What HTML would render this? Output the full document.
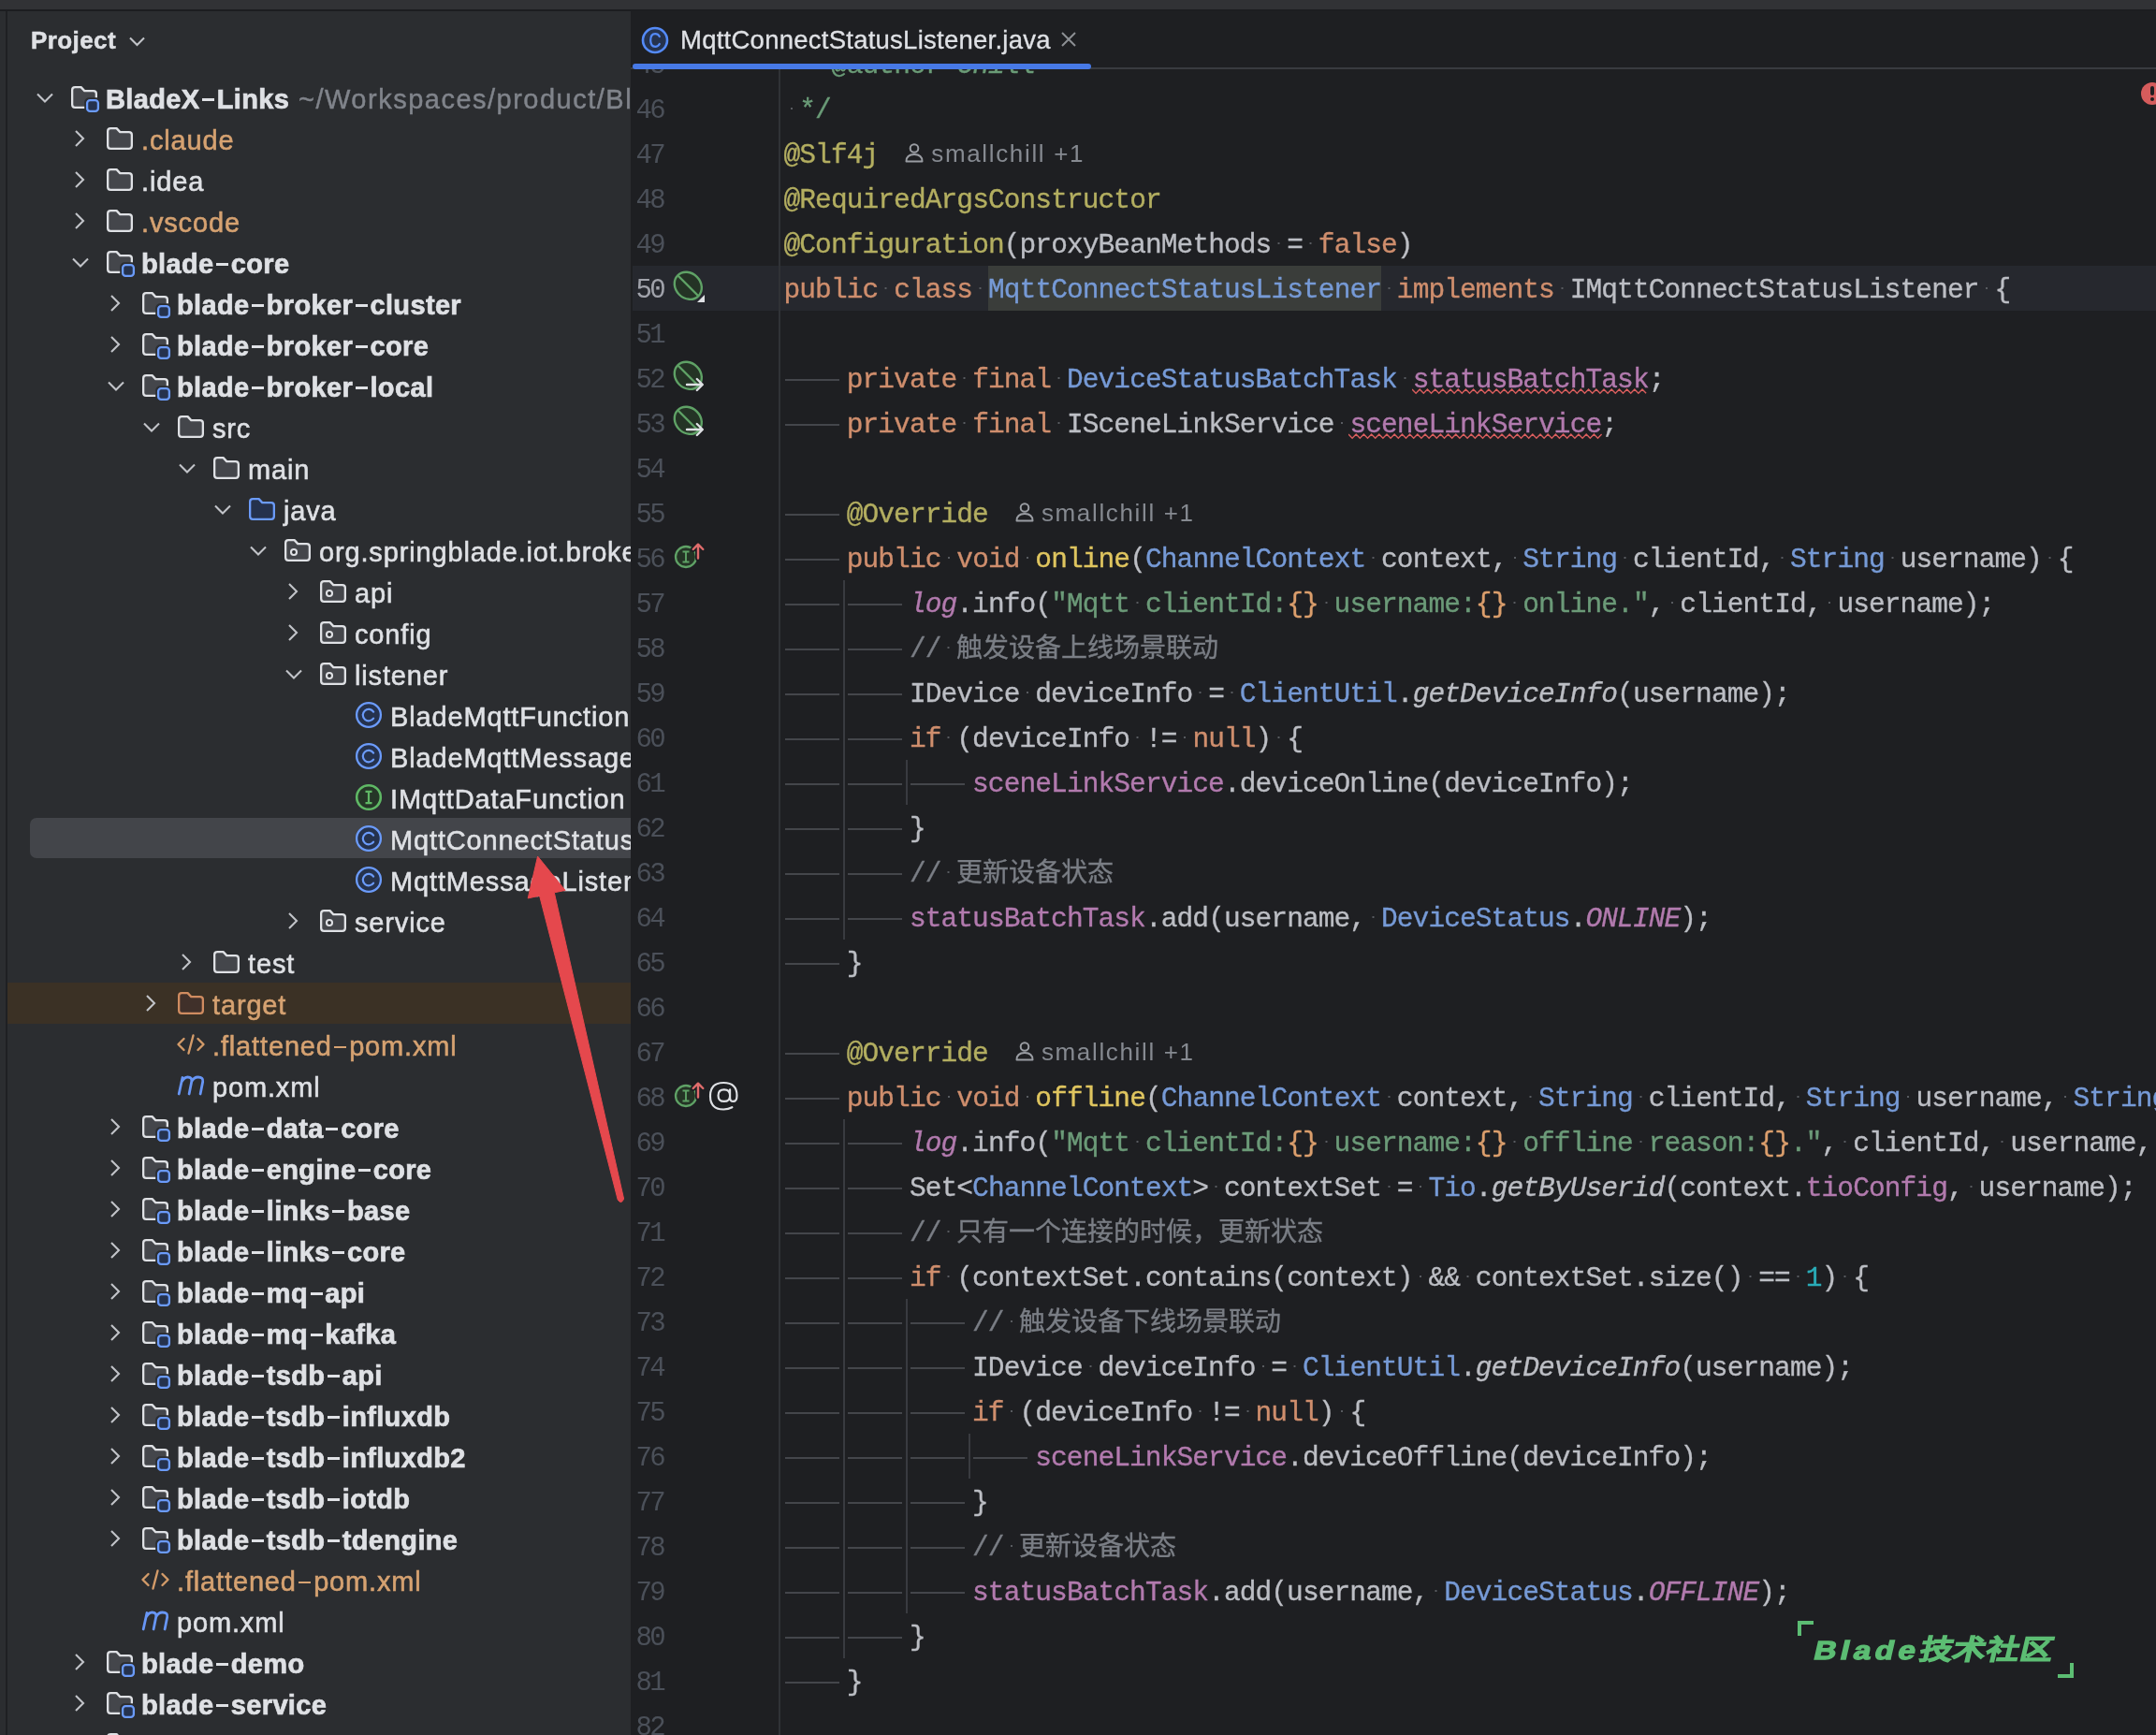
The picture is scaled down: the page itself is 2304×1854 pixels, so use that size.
<!DOCTYPE html><html lang="zh-CN"><head><meta charset="utf-8"><style>
*{margin:0;padding:0;box-sizing:border-box}
html,body{width:2304px;height:1854px;overflow:hidden;background:#2B2D30}
body{position:relative;font-family:"Liberation Sans",sans-serif}
#root{position:absolute;left:0;top:0;width:2304px;height:1854px;will-change:transform;background:#2B2D30}
.tt{position:absolute;height:44px;line-height:44px;font-size:29px;white-space:nowrap;color:#DFE1E5;letter-spacing:0.85px;padding-top:2px;-webkit-text-stroke:0.55px currentColor}
.dash{display:inline-block;width:18.3px;height:3px;position:relative;vertical-align:baseline}
.dash:after{content:'';position:absolute;left:2.6px;width:13px;height:2.6px;bottom:7.8px;background:currentColor}
.tb .dash:after{height:3.2px}
.tb{font-weight:bold;letter-spacing:0.35px;-webkit-text-stroke:0.7px #DFE1E5}
.to{color:#D6A271}
.tp{color:#80848B;font-weight:normal;-webkit-text-stroke:0.45px #80848B}
#side{position:absolute;left:0;top:12px;width:674px;height:1842px;background:#2B2D30;overflow:hidden}
#editor{position:absolute;left:674px;top:12px;width:1630px;height:1842px;background:#1E1F22;overflow:hidden}
.ln{position:absolute;left:674px;width:35px;height:48px;line-height:48px;text-align:right;font-family:"Liberation Mono",monospace;font-size:29px;letter-spacing:-2.6px;color:#4B5059;padding-top:3px}
.ln.cur{color:#A1A3AB}
.cl{position:absolute;left:837.5px;height:48px;line-height:48px;font-family:"Liberation Mono",monospace;font-size:29.5px;letter-spacing:-0.9px;color:#BCBEC4;white-space:pre;padding-top:2px;-webkit-text-stroke:0.35px currentColor}
.cjk{font-size:28px;letter-spacing:0}
.ws{background:radial-gradient(circle at 50% 15px, #585B60 0, #585B60 0.7px, rgba(0,0,0,0) 1.5px)}
.tab{display:inline-block;width:67.2px;height:48px;vertical-align:top;position:relative}
.tab:after{content:"";position:absolute;left:1px;width:58px;top:23px;height:2px;background:#44464B}
.kw{color:#CF8E6D}
.an{color:#B3AE60}
.bl{color:#769AD6}
.fd{color:#B27AAE}
.sf{color:#B27AAE;font-style:italic}
.md{color:#DFC55F}
.sc{font-style:italic}
.st{color:#6B9A78}
.sb{color:#DB9E6C}
.cm{color:#7A7E85}

.nm{color:#2AACB8}
.dc{color:#6A9B77}
.dt{color:#6A9B77}
.wavy{text-decoration:underline wavy #E35D5D;text-decoration-thickness:1.3px;text-underline-offset:1px}
.inl{position:absolute;height:48px;line-height:48px;font-size:26px;color:#868A91;white-space:nowrap;letter-spacing:1.65px;padding-top:2px}
</style></head><body><div id="root">
<div style="position:absolute;left:0;top:0;width:2304px;height:10px;background:#313235"></div>
<div style="position:absolute;left:0;top:10px;width:2304px;height:2px;background:#1C1D20"></div>
<div style="position:absolute;left:0;top:12px;width:674px;height:1842px;background:#2B2D30"></div>
<div style="position:absolute;left:6px;top:12px;width:2px;height:1842px;background:#1F2023"></div>
<div style="position:absolute;left:33px;top:19px;height:44px;line-height:44px;font-size:26px;font-weight:bold;color:#DFE1E5;letter-spacing:0.4px;padding-top:2px;-webkit-text-stroke:0.5px #DFE1E5">Project</div>
<svg width="20" height="14" viewBox="0 0 20 14" style="position:absolute;left:137px;top:38px"><path d="M2 2.5 L9.5 10 L17 2.5" fill="none" stroke="#C2C4C9" stroke-width="2.1"/></svg>
<div style="position:absolute;left:0;top:12px;width:674px;height:1842px;overflow:hidden">
<div style="position:absolute;left:0;top:-12px;width:674px;height:1854px">
<div style="position:absolute;left:38px;top:98px;width:20px;height:14px"><svg width="20" height="14" viewBox="0 0 20 14" style="position:absolute;left:0;top:0"><path d="M2 2.5 L10 10.5 L18 2.5" fill="none" stroke="#C2C4C9" stroke-width="2.1"/></svg></div>
<div style="position:absolute;left:76px;top:92px;width:28px;height:24px"><svg width="34" height="30" viewBox="0 0 34 30" style="position:absolute;left:-1px;top:-1px"><path d="M2.15 5.2 Q2.15 2.15 5.2 2.15 L11.6 2.15 L15.3 6.1 L24.8 6.1 Q27.85 6.1 27.85 9.1 L27.85 20.8 Q27.85 23.85 24.8 23.85 L5.2 23.85 Q2.15 23.85 2.15 20.8 Z" fill="#44464B" stroke="#DFE1E5" stroke-width="2.3" stroke-linejoin="round"/><rect x="15.2" y="13.2" width="17.6" height="17.6" rx="5" fill="#2B2D30"/><rect x="18.1" y="16.1" width="11.8" height="11.8" rx="3.2" fill="#25324D" stroke="#6B9BFA" stroke-width="2.3"/></svg></div>
<div class="tt tp" style="left:319px;top:82px;letter-spacing:1.5px">~/Workspaces/product/BladeX-Links</div>
<div class="tt tb" style="left:113px;top:82px">BladeX<span class="dash"></span>Links</div>
<div style="position:absolute;left:79px;top:138px;width:14px;height:20px;z-index:2"><svg width="14" height="20" viewBox="0 0 14 20" style="position:absolute;left:0;top:0"><path d="M2 2 L10 10 L2 18" fill="none" stroke="#C2C4C9" stroke-width="2.1"/></svg></div>
<div style="position:absolute;left:114px;top:136px;width:28px;height:24px"><svg width="30" height="26" viewBox="0 0 30 26" style="position:absolute;left:-1px;top:-1px"><path d="M2.15 5.2 Q2.15 2.15 5.2 2.15 L11.6 2.15 L15.3 6.1 L24.8 6.1 Q27.85 6.1 27.85 9.1 L27.85 20.8 Q27.85 23.85 24.8 23.85 L5.2 23.85 Q2.15 23.85 2.15 20.8 Z" fill="#44464B" stroke="#DFE1E5" stroke-width="2.3" stroke-linejoin="round"/></svg></div>
<div class="tt to" style="left:151px;top:126px">.claude</div>
<div style="position:absolute;left:79px;top:182px;width:14px;height:20px;z-index:2"><svg width="14" height="20" viewBox="0 0 14 20" style="position:absolute;left:0;top:0"><path d="M2 2 L10 10 L2 18" fill="none" stroke="#C2C4C9" stroke-width="2.1"/></svg></div>
<div style="position:absolute;left:114px;top:180px;width:28px;height:24px"><svg width="30" height="26" viewBox="0 0 30 26" style="position:absolute;left:-1px;top:-1px"><path d="M2.15 5.2 Q2.15 2.15 5.2 2.15 L11.6 2.15 L15.3 6.1 L24.8 6.1 Q27.85 6.1 27.85 9.1 L27.85 20.8 Q27.85 23.85 24.8 23.85 L5.2 23.85 Q2.15 23.85 2.15 20.8 Z" fill="#44464B" stroke="#DFE1E5" stroke-width="2.3" stroke-linejoin="round"/></svg></div>
<div class="tt tn" style="left:151px;top:170px">.idea</div>
<div style="position:absolute;left:79px;top:226px;width:14px;height:20px;z-index:2"><svg width="14" height="20" viewBox="0 0 14 20" style="position:absolute;left:0;top:0"><path d="M2 2 L10 10 L2 18" fill="none" stroke="#C2C4C9" stroke-width="2.1"/></svg></div>
<div style="position:absolute;left:114px;top:224px;width:28px;height:24px"><svg width="30" height="26" viewBox="0 0 30 26" style="position:absolute;left:-1px;top:-1px"><path d="M2.15 5.2 Q2.15 2.15 5.2 2.15 L11.6 2.15 L15.3 6.1 L24.8 6.1 Q27.85 6.1 27.85 9.1 L27.85 20.8 Q27.85 23.85 24.8 23.85 L5.2 23.85 Q2.15 23.85 2.15 20.8 Z" fill="#44464B" stroke="#DFE1E5" stroke-width="2.3" stroke-linejoin="round"/></svg></div>
<div class="tt to" style="left:151px;top:214px">.vscode</div>
<div style="position:absolute;left:76px;top:274px;width:20px;height:14px"><svg width="20" height="14" viewBox="0 0 20 14" style="position:absolute;left:0;top:0"><path d="M2 2.5 L10 10.5 L18 2.5" fill="none" stroke="#C2C4C9" stroke-width="2.1"/></svg></div>
<div style="position:absolute;left:114px;top:268px;width:28px;height:24px"><svg width="34" height="30" viewBox="0 0 34 30" style="position:absolute;left:-1px;top:-1px"><path d="M2.15 5.2 Q2.15 2.15 5.2 2.15 L11.6 2.15 L15.3 6.1 L24.8 6.1 Q27.85 6.1 27.85 9.1 L27.85 20.8 Q27.85 23.85 24.8 23.85 L5.2 23.85 Q2.15 23.85 2.15 20.8 Z" fill="#44464B" stroke="#DFE1E5" stroke-width="2.3" stroke-linejoin="round"/><rect x="15.2" y="13.2" width="17.6" height="17.6" rx="5" fill="#2B2D30"/><rect x="18.1" y="16.1" width="11.8" height="11.8" rx="3.2" fill="#25324D" stroke="#6B9BFA" stroke-width="2.3"/></svg></div>
<div class="tt tb" style="left:151px;top:258px">blade<span class="dash"></span>core</div>
<div style="position:absolute;left:117px;top:314px;width:14px;height:20px;z-index:2"><svg width="14" height="20" viewBox="0 0 14 20" style="position:absolute;left:0;top:0"><path d="M2 2 L10 10 L2 18" fill="none" stroke="#C2C4C9" stroke-width="2.1"/></svg></div>
<div style="position:absolute;left:152px;top:312px;width:28px;height:24px"><svg width="34" height="30" viewBox="0 0 34 30" style="position:absolute;left:-1px;top:-1px"><path d="M2.15 5.2 Q2.15 2.15 5.2 2.15 L11.6 2.15 L15.3 6.1 L24.8 6.1 Q27.85 6.1 27.85 9.1 L27.85 20.8 Q27.85 23.85 24.8 23.85 L5.2 23.85 Q2.15 23.85 2.15 20.8 Z" fill="#44464B" stroke="#DFE1E5" stroke-width="2.3" stroke-linejoin="round"/><rect x="15.2" y="13.2" width="17.6" height="17.6" rx="5" fill="#2B2D30"/><rect x="18.1" y="16.1" width="11.8" height="11.8" rx="3.2" fill="#25324D" stroke="#6B9BFA" stroke-width="2.3"/></svg></div>
<div class="tt tb" style="left:189px;top:302px">blade<span class="dash"></span>broker<span class="dash"></span>cluster</div>
<div style="position:absolute;left:117px;top:358px;width:14px;height:20px;z-index:2"><svg width="14" height="20" viewBox="0 0 14 20" style="position:absolute;left:0;top:0"><path d="M2 2 L10 10 L2 18" fill="none" stroke="#C2C4C9" stroke-width="2.1"/></svg></div>
<div style="position:absolute;left:152px;top:356px;width:28px;height:24px"><svg width="34" height="30" viewBox="0 0 34 30" style="position:absolute;left:-1px;top:-1px"><path d="M2.15 5.2 Q2.15 2.15 5.2 2.15 L11.6 2.15 L15.3 6.1 L24.8 6.1 Q27.85 6.1 27.85 9.1 L27.85 20.8 Q27.85 23.85 24.8 23.85 L5.2 23.85 Q2.15 23.85 2.15 20.8 Z" fill="#44464B" stroke="#DFE1E5" stroke-width="2.3" stroke-linejoin="round"/><rect x="15.2" y="13.2" width="17.6" height="17.6" rx="5" fill="#2B2D30"/><rect x="18.1" y="16.1" width="11.8" height="11.8" rx="3.2" fill="#25324D" stroke="#6B9BFA" stroke-width="2.3"/></svg></div>
<div class="tt tb" style="left:189px;top:346px">blade<span class="dash"></span>broker<span class="dash"></span>core</div>
<div style="position:absolute;left:114px;top:406px;width:20px;height:14px"><svg width="20" height="14" viewBox="0 0 20 14" style="position:absolute;left:0;top:0"><path d="M2 2.5 L10 10.5 L18 2.5" fill="none" stroke="#C2C4C9" stroke-width="2.1"/></svg></div>
<div style="position:absolute;left:152px;top:400px;width:28px;height:24px"><svg width="34" height="30" viewBox="0 0 34 30" style="position:absolute;left:-1px;top:-1px"><path d="M2.15 5.2 Q2.15 2.15 5.2 2.15 L11.6 2.15 L15.3 6.1 L24.8 6.1 Q27.85 6.1 27.85 9.1 L27.85 20.8 Q27.85 23.85 24.8 23.85 L5.2 23.85 Q2.15 23.85 2.15 20.8 Z" fill="#44464B" stroke="#DFE1E5" stroke-width="2.3" stroke-linejoin="round"/><rect x="15.2" y="13.2" width="17.6" height="17.6" rx="5" fill="#2B2D30"/><rect x="18.1" y="16.1" width="11.8" height="11.8" rx="3.2" fill="#25324D" stroke="#6B9BFA" stroke-width="2.3"/></svg></div>
<div class="tt tb" style="left:189px;top:390px">blade<span class="dash"></span>broker<span class="dash"></span>local</div>
<div style="position:absolute;left:152px;top:450px;width:20px;height:14px"><svg width="20" height="14" viewBox="0 0 20 14" style="position:absolute;left:0;top:0"><path d="M2 2.5 L10 10.5 L18 2.5" fill="none" stroke="#C2C4C9" stroke-width="2.1"/></svg></div>
<div style="position:absolute;left:190px;top:444px;width:28px;height:24px"><svg width="30" height="26" viewBox="0 0 30 26" style="position:absolute;left:-1px;top:-1px"><path d="M2.15 5.2 Q2.15 2.15 5.2 2.15 L11.6 2.15 L15.3 6.1 L24.8 6.1 Q27.85 6.1 27.85 9.1 L27.85 20.8 Q27.85 23.85 24.8 23.85 L5.2 23.85 Q2.15 23.85 2.15 20.8 Z" fill="#44464B" stroke="#DFE1E5" stroke-width="2.3" stroke-linejoin="round"/></svg></div>
<div class="tt tn" style="left:227px;top:434px">src</div>
<div style="position:absolute;left:190px;top:494px;width:20px;height:14px"><svg width="20" height="14" viewBox="0 0 20 14" style="position:absolute;left:0;top:0"><path d="M2 2.5 L10 10.5 L18 2.5" fill="none" stroke="#C2C4C9" stroke-width="2.1"/></svg></div>
<div style="position:absolute;left:228px;top:488px;width:28px;height:24px"><svg width="30" height="26" viewBox="0 0 30 26" style="position:absolute;left:-1px;top:-1px"><path d="M2.15 5.2 Q2.15 2.15 5.2 2.15 L11.6 2.15 L15.3 6.1 L24.8 6.1 Q27.85 6.1 27.85 9.1 L27.85 20.8 Q27.85 23.85 24.8 23.85 L5.2 23.85 Q2.15 23.85 2.15 20.8 Z" fill="#44464B" stroke="#DFE1E5" stroke-width="2.3" stroke-linejoin="round"/></svg></div>
<div class="tt tn" style="left:265px;top:478px">main</div>
<div style="position:absolute;left:228px;top:538px;width:20px;height:14px"><svg width="20" height="14" viewBox="0 0 20 14" style="position:absolute;left:0;top:0"><path d="M2 2.5 L10 10.5 L18 2.5" fill="none" stroke="#C2C4C9" stroke-width="2.1"/></svg></div>
<div style="position:absolute;left:266px;top:532px;width:28px;height:24px"><svg width="30" height="26" viewBox="0 0 30 26" style="position:absolute;left:-1px;top:-1px"><path d="M2.15 5.2 Q2.15 2.15 5.2 2.15 L11.6 2.15 L15.3 6.1 L24.8 6.1 Q27.85 6.1 27.85 9.1 L27.85 20.8 Q27.85 23.85 24.8 23.85 L5.2 23.85 Q2.15 23.85 2.15 20.8 Z" fill="#25324D" stroke="#6B9BFA" stroke-width="2.3" stroke-linejoin="round"/></svg></div>
<div class="tt tn" style="left:303px;top:522px">java</div>
<div style="position:absolute;left:266px;top:582px;width:20px;height:14px"><svg width="20" height="14" viewBox="0 0 20 14" style="position:absolute;left:0;top:0"><path d="M2 2.5 L10 10.5 L18 2.5" fill="none" stroke="#C2C4C9" stroke-width="2.1"/></svg></div>
<div style="position:absolute;left:304px;top:576px;width:28px;height:24px"><svg width="30" height="26" viewBox="0 0 30 26" style="position:absolute;left:-1px;top:-1px"><path d="M2.15 5.2 Q2.15 2.15 5.2 2.15 L11.6 2.15 L15.3 6.1 L24.8 6.1 Q27.85 6.1 27.85 9.1 L27.85 20.8 Q27.85 23.85 24.8 23.85 L5.2 23.85 Q2.15 23.85 2.15 20.8 Z" fill="#44464B" stroke="#DFE1E5" stroke-width="2.3" stroke-linejoin="round"/><circle cx="11" cy="15" r="3" fill="#2B2D30" stroke="#DFE1E5" stroke-width="2.1"/></svg></div>
<div class="tt tn" style="left:341px;top:566px">org.springblade.iot.broker.local</div>
<div style="position:absolute;left:307px;top:622px;width:14px;height:20px;z-index:2"><svg width="14" height="20" viewBox="0 0 14 20" style="position:absolute;left:0;top:0"><path d="M2 2 L10 10 L2 18" fill="none" stroke="#C2C4C9" stroke-width="2.1"/></svg></div>
<div style="position:absolute;left:342px;top:620px;width:28px;height:24px"><svg width="30" height="26" viewBox="0 0 30 26" style="position:absolute;left:-1px;top:-1px"><path d="M2.15 5.2 Q2.15 2.15 5.2 2.15 L11.6 2.15 L15.3 6.1 L24.8 6.1 Q27.85 6.1 27.85 9.1 L27.85 20.8 Q27.85 23.85 24.8 23.85 L5.2 23.85 Q2.15 23.85 2.15 20.8 Z" fill="#44464B" stroke="#DFE1E5" stroke-width="2.3" stroke-linejoin="round"/><circle cx="11" cy="15" r="3" fill="#2B2D30" stroke="#DFE1E5" stroke-width="2.1"/></svg></div>
<div class="tt tn" style="left:379px;top:610px">api</div>
<div style="position:absolute;left:307px;top:666px;width:14px;height:20px;z-index:2"><svg width="14" height="20" viewBox="0 0 14 20" style="position:absolute;left:0;top:0"><path d="M2 2 L10 10 L2 18" fill="none" stroke="#C2C4C9" stroke-width="2.1"/></svg></div>
<div style="position:absolute;left:342px;top:664px;width:28px;height:24px"><svg width="30" height="26" viewBox="0 0 30 26" style="position:absolute;left:-1px;top:-1px"><path d="M2.15 5.2 Q2.15 2.15 5.2 2.15 L11.6 2.15 L15.3 6.1 L24.8 6.1 Q27.85 6.1 27.85 9.1 L27.85 20.8 Q27.85 23.85 24.8 23.85 L5.2 23.85 Q2.15 23.85 2.15 20.8 Z" fill="#44464B" stroke="#DFE1E5" stroke-width="2.3" stroke-linejoin="round"/><circle cx="11" cy="15" r="3" fill="#2B2D30" stroke="#DFE1E5" stroke-width="2.1"/></svg></div>
<div class="tt tn" style="left:379px;top:654px">config</div>
<div style="position:absolute;left:304px;top:714px;width:20px;height:14px"><svg width="20" height="14" viewBox="0 0 20 14" style="position:absolute;left:0;top:0"><path d="M2 2.5 L10 10.5 L18 2.5" fill="none" stroke="#C2C4C9" stroke-width="2.1"/></svg></div>
<div style="position:absolute;left:342px;top:708px;width:28px;height:24px"><svg width="30" height="26" viewBox="0 0 30 26" style="position:absolute;left:-1px;top:-1px"><path d="M2.15 5.2 Q2.15 2.15 5.2 2.15 L11.6 2.15 L15.3 6.1 L24.8 6.1 Q27.85 6.1 27.85 9.1 L27.85 20.8 Q27.85 23.85 24.8 23.85 L5.2 23.85 Q2.15 23.85 2.15 20.8 Z" fill="#44464B" stroke="#DFE1E5" stroke-width="2.3" stroke-linejoin="round"/><circle cx="11" cy="15" r="3" fill="#2B2D30" stroke="#DFE1E5" stroke-width="2.1"/></svg></div>
<div class="tt tn" style="left:379px;top:698px">listener</div>
<div style="position:absolute;left:380px;top:750px;width:28px;height:24px"><svg width="30" height="30" viewBox="0 0 30 30" style="position:absolute;left:-1px;top:-1px"><circle cx="15" cy="15" r="12.9" fill="#25324D" stroke="#6B9BFA" stroke-width="2.3"/><path d="M20.1 11.6 A6.2 6.2 0 1 0 20.1 18.6" fill="none" stroke="#6B9BFA" stroke-width="2.2" stroke-linecap="round"/></svg></div>
<div class="tt tn" style="left:417px;top:742px">BladeMqttFunctionListener</div>
<div style="position:absolute;left:380px;top:794px;width:28px;height:24px"><svg width="30" height="30" viewBox="0 0 30 30" style="position:absolute;left:-1px;top:-1px"><circle cx="15" cy="15" r="12.9" fill="#25324D" stroke="#6B9BFA" stroke-width="2.3"/><path d="M20.1 11.6 A6.2 6.2 0 1 0 20.1 18.6" fill="none" stroke="#6B9BFA" stroke-width="2.2" stroke-linecap="round"/></svg></div>
<div class="tt tn" style="left:417px;top:786px">BladeMqttMessageListener</div>
<div style="position:absolute;left:380px;top:838px;width:28px;height:24px"><svg width="30" height="30" viewBox="0 0 30 30" style="position:absolute;left:-1px;top:-1px"><circle cx="15" cy="15" r="12.8" fill="#253627" stroke="#5FB865" stroke-width="2.6"/><path d="M11.5 8.8 H18.5 M15 8.8 V21.2 M11.5 21.2 H18.5" fill="none" stroke="#5FB865" stroke-width="2.2"/></svg></div>
<div class="tt tn" style="left:417px;top:830px">IMqttDataFunction</div>
<div style="position:absolute;left:32px;top:874px;width:660px;height:43px;background:#43454A;border-radius:7px"></div>
<div style="position:absolute;left:380px;top:882px;width:28px;height:24px"><svg width="30" height="30" viewBox="0 0 30 30" style="position:absolute;left:-1px;top:-1px"><circle cx="15" cy="15" r="12.9" fill="#25324D" stroke="#6B9BFA" stroke-width="2.3"/><path d="M20.1 11.6 A6.2 6.2 0 1 0 20.1 18.6" fill="none" stroke="#6B9BFA" stroke-width="2.2" stroke-linecap="round"/></svg></div>
<div class="tt tn" style="left:417px;top:874px">MqttConnectStatusListener</div>
<div style="position:absolute;left:380px;top:926px;width:28px;height:24px"><svg width="30" height="30" viewBox="0 0 30 30" style="position:absolute;left:-1px;top:-1px"><circle cx="15" cy="15" r="12.9" fill="#25324D" stroke="#6B9BFA" stroke-width="2.3"/><path d="M20.1 11.6 A6.2 6.2 0 1 0 20.1 18.6" fill="none" stroke="#6B9BFA" stroke-width="2.2" stroke-linecap="round"/></svg></div>
<div class="tt tn" style="left:417px;top:918px">MqttMessageListener</div>
<div style="position:absolute;left:307px;top:974px;width:14px;height:20px;z-index:2"><svg width="14" height="20" viewBox="0 0 14 20" style="position:absolute;left:0;top:0"><path d="M2 2 L10 10 L2 18" fill="none" stroke="#C2C4C9" stroke-width="2.1"/></svg></div>
<div style="position:absolute;left:342px;top:972px;width:28px;height:24px"><svg width="30" height="26" viewBox="0 0 30 26" style="position:absolute;left:-1px;top:-1px"><path d="M2.15 5.2 Q2.15 2.15 5.2 2.15 L11.6 2.15 L15.3 6.1 L24.8 6.1 Q27.85 6.1 27.85 9.1 L27.85 20.8 Q27.85 23.85 24.8 23.85 L5.2 23.85 Q2.15 23.85 2.15 20.8 Z" fill="#44464B" stroke="#DFE1E5" stroke-width="2.3" stroke-linejoin="round"/><circle cx="11" cy="15" r="3" fill="#2B2D30" stroke="#DFE1E5" stroke-width="2.1"/></svg></div>
<div class="tt tn" style="left:379px;top:962px">service</div>
<div style="position:absolute;left:193px;top:1018px;width:14px;height:20px;z-index:2"><svg width="14" height="20" viewBox="0 0 14 20" style="position:absolute;left:0;top:0"><path d="M2 2 L10 10 L2 18" fill="none" stroke="#C2C4C9" stroke-width="2.1"/></svg></div>
<div style="position:absolute;left:228px;top:1016px;width:28px;height:24px"><svg width="30" height="26" viewBox="0 0 30 26" style="position:absolute;left:-1px;top:-1px"><path d="M2.15 5.2 Q2.15 2.15 5.2 2.15 L11.6 2.15 L15.3 6.1 L24.8 6.1 Q27.85 6.1 27.85 9.1 L27.85 20.8 Q27.85 23.85 24.8 23.85 L5.2 23.85 Q2.15 23.85 2.15 20.8 Z" fill="#44464B" stroke="#DFE1E5" stroke-width="2.3" stroke-linejoin="round"/></svg></div>
<div class="tt tn" style="left:265px;top:1006px">test</div>
<div style="position:absolute;left:8px;top:1050px;width:666px;height:44px;background:#3B3125"></div>
<div style="position:absolute;left:155px;top:1062px;width:14px;height:20px;z-index:2"><svg width="14" height="20" viewBox="0 0 14 20" style="position:absolute;left:0;top:0"><path d="M2 2 L10 10 L2 18" fill="none" stroke="#C2C4C9" stroke-width="2.1"/></svg></div>
<div style="position:absolute;left:190px;top:1060px;width:28px;height:24px"><svg width="30" height="26" viewBox="0 0 30 26" style="position:absolute;left:-1px;top:-1px"><path d="M2.15 5.2 Q2.15 2.15 5.2 2.15 L11.6 2.15 L15.3 6.1 L24.8 6.1 Q27.85 6.1 27.85 9.1 L27.85 20.8 Q27.85 23.85 24.8 23.85 L5.2 23.85 Q2.15 23.85 2.15 20.8 Z" fill="#40302A" stroke="#D08C60" stroke-width="2.3" stroke-linejoin="round"/></svg></div>
<div class="tt to" style="left:227px;top:1050px">target</div>
<div style="position:absolute;left:190px;top:1102px;width:28px;height:24px"><svg width="32" height="30" viewBox="0 0 32 30" style="position:absolute;left:-2px;top:-1px"><path d="M8.5 9 L2.5 15 L8.5 21 M23.5 9 L29.5 15 L23.5 21 M18.5 5.5 L13.5 24.5" fill="none" stroke="#D39B69" stroke-width="2.4" stroke-linecap="round" stroke-linejoin="round"/></svg></div>
<div class="tt to" style="left:227px;top:1094px">.flattened<span class="dash"></span>pom.xml</div>
<div style="position:absolute;left:190px;top:1146px;width:28px;height:24px"><svg width="32" height="30" viewBox="0 0 32 30" style="position:absolute;left:-1px;top:-1px"><path d="M2.2 24 L6 6.5 M4.9 11.5 Q7.6 6 11.6 6 Q16.6 6 15.7 11 L13.1 24 M15.7 11 Q18.1 6 22.6 6 Q28.6 6 27.7 11 L25.1 24" fill="none" stroke="#6896F5" stroke-width="2.8" stroke-linecap="round" stroke-linejoin="round"/></svg></div>
<div class="tt tn" style="left:227px;top:1138px">pom.xml</div>
<div style="position:absolute;left:117px;top:1194px;width:14px;height:20px;z-index:2"><svg width="14" height="20" viewBox="0 0 14 20" style="position:absolute;left:0;top:0"><path d="M2 2 L10 10 L2 18" fill="none" stroke="#C2C4C9" stroke-width="2.1"/></svg></div>
<div style="position:absolute;left:152px;top:1192px;width:28px;height:24px"><svg width="34" height="30" viewBox="0 0 34 30" style="position:absolute;left:-1px;top:-1px"><path d="M2.15 5.2 Q2.15 2.15 5.2 2.15 L11.6 2.15 L15.3 6.1 L24.8 6.1 Q27.85 6.1 27.85 9.1 L27.85 20.8 Q27.85 23.85 24.8 23.85 L5.2 23.85 Q2.15 23.85 2.15 20.8 Z" fill="#44464B" stroke="#DFE1E5" stroke-width="2.3" stroke-linejoin="round"/><rect x="15.2" y="13.2" width="17.6" height="17.6" rx="5" fill="#2B2D30"/><rect x="18.1" y="16.1" width="11.8" height="11.8" rx="3.2" fill="#25324D" stroke="#6B9BFA" stroke-width="2.3"/></svg></div>
<div class="tt tb" style="left:189px;top:1182px">blade<span class="dash"></span>data<span class="dash"></span>core</div>
<div style="position:absolute;left:117px;top:1238px;width:14px;height:20px;z-index:2"><svg width="14" height="20" viewBox="0 0 14 20" style="position:absolute;left:0;top:0"><path d="M2 2 L10 10 L2 18" fill="none" stroke="#C2C4C9" stroke-width="2.1"/></svg></div>
<div style="position:absolute;left:152px;top:1236px;width:28px;height:24px"><svg width="34" height="30" viewBox="0 0 34 30" style="position:absolute;left:-1px;top:-1px"><path d="M2.15 5.2 Q2.15 2.15 5.2 2.15 L11.6 2.15 L15.3 6.1 L24.8 6.1 Q27.85 6.1 27.85 9.1 L27.85 20.8 Q27.85 23.85 24.8 23.85 L5.2 23.85 Q2.15 23.85 2.15 20.8 Z" fill="#44464B" stroke="#DFE1E5" stroke-width="2.3" stroke-linejoin="round"/><rect x="15.2" y="13.2" width="17.6" height="17.6" rx="5" fill="#2B2D30"/><rect x="18.1" y="16.1" width="11.8" height="11.8" rx="3.2" fill="#25324D" stroke="#6B9BFA" stroke-width="2.3"/></svg></div>
<div class="tt tb" style="left:189px;top:1226px">blade<span class="dash"></span>engine<span class="dash"></span>core</div>
<div style="position:absolute;left:117px;top:1282px;width:14px;height:20px;z-index:2"><svg width="14" height="20" viewBox="0 0 14 20" style="position:absolute;left:0;top:0"><path d="M2 2 L10 10 L2 18" fill="none" stroke="#C2C4C9" stroke-width="2.1"/></svg></div>
<div style="position:absolute;left:152px;top:1280px;width:28px;height:24px"><svg width="34" height="30" viewBox="0 0 34 30" style="position:absolute;left:-1px;top:-1px"><path d="M2.15 5.2 Q2.15 2.15 5.2 2.15 L11.6 2.15 L15.3 6.1 L24.8 6.1 Q27.85 6.1 27.85 9.1 L27.85 20.8 Q27.85 23.85 24.8 23.85 L5.2 23.85 Q2.15 23.85 2.15 20.8 Z" fill="#44464B" stroke="#DFE1E5" stroke-width="2.3" stroke-linejoin="round"/><rect x="15.2" y="13.2" width="17.6" height="17.6" rx="5" fill="#2B2D30"/><rect x="18.1" y="16.1" width="11.8" height="11.8" rx="3.2" fill="#25324D" stroke="#6B9BFA" stroke-width="2.3"/></svg></div>
<div class="tt tb" style="left:189px;top:1270px">blade<span class="dash"></span>links<span class="dash"></span>base</div>
<div style="position:absolute;left:117px;top:1326px;width:14px;height:20px;z-index:2"><svg width="14" height="20" viewBox="0 0 14 20" style="position:absolute;left:0;top:0"><path d="M2 2 L10 10 L2 18" fill="none" stroke="#C2C4C9" stroke-width="2.1"/></svg></div>
<div style="position:absolute;left:152px;top:1324px;width:28px;height:24px"><svg width="34" height="30" viewBox="0 0 34 30" style="position:absolute;left:-1px;top:-1px"><path d="M2.15 5.2 Q2.15 2.15 5.2 2.15 L11.6 2.15 L15.3 6.1 L24.8 6.1 Q27.85 6.1 27.85 9.1 L27.85 20.8 Q27.85 23.85 24.8 23.85 L5.2 23.85 Q2.15 23.85 2.15 20.8 Z" fill="#44464B" stroke="#DFE1E5" stroke-width="2.3" stroke-linejoin="round"/><rect x="15.2" y="13.2" width="17.6" height="17.6" rx="5" fill="#2B2D30"/><rect x="18.1" y="16.1" width="11.8" height="11.8" rx="3.2" fill="#25324D" stroke="#6B9BFA" stroke-width="2.3"/></svg></div>
<div class="tt tb" style="left:189px;top:1314px">blade<span class="dash"></span>links<span class="dash"></span>core</div>
<div style="position:absolute;left:117px;top:1370px;width:14px;height:20px;z-index:2"><svg width="14" height="20" viewBox="0 0 14 20" style="position:absolute;left:0;top:0"><path d="M2 2 L10 10 L2 18" fill="none" stroke="#C2C4C9" stroke-width="2.1"/></svg></div>
<div style="position:absolute;left:152px;top:1368px;width:28px;height:24px"><svg width="34" height="30" viewBox="0 0 34 30" style="position:absolute;left:-1px;top:-1px"><path d="M2.15 5.2 Q2.15 2.15 5.2 2.15 L11.6 2.15 L15.3 6.1 L24.8 6.1 Q27.85 6.1 27.85 9.1 L27.85 20.8 Q27.85 23.85 24.8 23.85 L5.2 23.85 Q2.15 23.85 2.15 20.8 Z" fill="#44464B" stroke="#DFE1E5" stroke-width="2.3" stroke-linejoin="round"/><rect x="15.2" y="13.2" width="17.6" height="17.6" rx="5" fill="#2B2D30"/><rect x="18.1" y="16.1" width="11.8" height="11.8" rx="3.2" fill="#25324D" stroke="#6B9BFA" stroke-width="2.3"/></svg></div>
<div class="tt tb" style="left:189px;top:1358px">blade<span class="dash"></span>mq<span class="dash"></span>api</div>
<div style="position:absolute;left:117px;top:1414px;width:14px;height:20px;z-index:2"><svg width="14" height="20" viewBox="0 0 14 20" style="position:absolute;left:0;top:0"><path d="M2 2 L10 10 L2 18" fill="none" stroke="#C2C4C9" stroke-width="2.1"/></svg></div>
<div style="position:absolute;left:152px;top:1412px;width:28px;height:24px"><svg width="34" height="30" viewBox="0 0 34 30" style="position:absolute;left:-1px;top:-1px"><path d="M2.15 5.2 Q2.15 2.15 5.2 2.15 L11.6 2.15 L15.3 6.1 L24.8 6.1 Q27.85 6.1 27.85 9.1 L27.85 20.8 Q27.85 23.85 24.8 23.85 L5.2 23.85 Q2.15 23.85 2.15 20.8 Z" fill="#44464B" stroke="#DFE1E5" stroke-width="2.3" stroke-linejoin="round"/><rect x="15.2" y="13.2" width="17.6" height="17.6" rx="5" fill="#2B2D30"/><rect x="18.1" y="16.1" width="11.8" height="11.8" rx="3.2" fill="#25324D" stroke="#6B9BFA" stroke-width="2.3"/></svg></div>
<div class="tt tb" style="left:189px;top:1402px">blade<span class="dash"></span>mq<span class="dash"></span>kafka</div>
<div style="position:absolute;left:117px;top:1458px;width:14px;height:20px;z-index:2"><svg width="14" height="20" viewBox="0 0 14 20" style="position:absolute;left:0;top:0"><path d="M2 2 L10 10 L2 18" fill="none" stroke="#C2C4C9" stroke-width="2.1"/></svg></div>
<div style="position:absolute;left:152px;top:1456px;width:28px;height:24px"><svg width="34" height="30" viewBox="0 0 34 30" style="position:absolute;left:-1px;top:-1px"><path d="M2.15 5.2 Q2.15 2.15 5.2 2.15 L11.6 2.15 L15.3 6.1 L24.8 6.1 Q27.85 6.1 27.85 9.1 L27.85 20.8 Q27.85 23.85 24.8 23.85 L5.2 23.85 Q2.15 23.85 2.15 20.8 Z" fill="#44464B" stroke="#DFE1E5" stroke-width="2.3" stroke-linejoin="round"/><rect x="15.2" y="13.2" width="17.6" height="17.6" rx="5" fill="#2B2D30"/><rect x="18.1" y="16.1" width="11.8" height="11.8" rx="3.2" fill="#25324D" stroke="#6B9BFA" stroke-width="2.3"/></svg></div>
<div class="tt tb" style="left:189px;top:1446px">blade<span class="dash"></span>tsdb<span class="dash"></span>api</div>
<div style="position:absolute;left:117px;top:1502px;width:14px;height:20px;z-index:2"><svg width="14" height="20" viewBox="0 0 14 20" style="position:absolute;left:0;top:0"><path d="M2 2 L10 10 L2 18" fill="none" stroke="#C2C4C9" stroke-width="2.1"/></svg></div>
<div style="position:absolute;left:152px;top:1500px;width:28px;height:24px"><svg width="34" height="30" viewBox="0 0 34 30" style="position:absolute;left:-1px;top:-1px"><path d="M2.15 5.2 Q2.15 2.15 5.2 2.15 L11.6 2.15 L15.3 6.1 L24.8 6.1 Q27.85 6.1 27.85 9.1 L27.85 20.8 Q27.85 23.85 24.8 23.85 L5.2 23.85 Q2.15 23.85 2.15 20.8 Z" fill="#44464B" stroke="#DFE1E5" stroke-width="2.3" stroke-linejoin="round"/><rect x="15.2" y="13.2" width="17.6" height="17.6" rx="5" fill="#2B2D30"/><rect x="18.1" y="16.1" width="11.8" height="11.8" rx="3.2" fill="#25324D" stroke="#6B9BFA" stroke-width="2.3"/></svg></div>
<div class="tt tb" style="left:189px;top:1490px">blade<span class="dash"></span>tsdb<span class="dash"></span>influxdb</div>
<div style="position:absolute;left:117px;top:1546px;width:14px;height:20px;z-index:2"><svg width="14" height="20" viewBox="0 0 14 20" style="position:absolute;left:0;top:0"><path d="M2 2 L10 10 L2 18" fill="none" stroke="#C2C4C9" stroke-width="2.1"/></svg></div>
<div style="position:absolute;left:152px;top:1544px;width:28px;height:24px"><svg width="34" height="30" viewBox="0 0 34 30" style="position:absolute;left:-1px;top:-1px"><path d="M2.15 5.2 Q2.15 2.15 5.2 2.15 L11.6 2.15 L15.3 6.1 L24.8 6.1 Q27.85 6.1 27.85 9.1 L27.85 20.8 Q27.85 23.85 24.8 23.85 L5.2 23.85 Q2.15 23.85 2.15 20.8 Z" fill="#44464B" stroke="#DFE1E5" stroke-width="2.3" stroke-linejoin="round"/><rect x="15.2" y="13.2" width="17.6" height="17.6" rx="5" fill="#2B2D30"/><rect x="18.1" y="16.1" width="11.8" height="11.8" rx="3.2" fill="#25324D" stroke="#6B9BFA" stroke-width="2.3"/></svg></div>
<div class="tt tb" style="left:189px;top:1534px">blade<span class="dash"></span>tsdb<span class="dash"></span>influxdb2</div>
<div style="position:absolute;left:117px;top:1590px;width:14px;height:20px;z-index:2"><svg width="14" height="20" viewBox="0 0 14 20" style="position:absolute;left:0;top:0"><path d="M2 2 L10 10 L2 18" fill="none" stroke="#C2C4C9" stroke-width="2.1"/></svg></div>
<div style="position:absolute;left:152px;top:1588px;width:28px;height:24px"><svg width="34" height="30" viewBox="0 0 34 30" style="position:absolute;left:-1px;top:-1px"><path d="M2.15 5.2 Q2.15 2.15 5.2 2.15 L11.6 2.15 L15.3 6.1 L24.8 6.1 Q27.85 6.1 27.85 9.1 L27.85 20.8 Q27.85 23.85 24.8 23.85 L5.2 23.85 Q2.15 23.85 2.15 20.8 Z" fill="#44464B" stroke="#DFE1E5" stroke-width="2.3" stroke-linejoin="round"/><rect x="15.2" y="13.2" width="17.6" height="17.6" rx="5" fill="#2B2D30"/><rect x="18.1" y="16.1" width="11.8" height="11.8" rx="3.2" fill="#25324D" stroke="#6B9BFA" stroke-width="2.3"/></svg></div>
<div class="tt tb" style="left:189px;top:1578px">blade<span class="dash"></span>tsdb<span class="dash"></span>iotdb</div>
<div style="position:absolute;left:117px;top:1634px;width:14px;height:20px;z-index:2"><svg width="14" height="20" viewBox="0 0 14 20" style="position:absolute;left:0;top:0"><path d="M2 2 L10 10 L2 18" fill="none" stroke="#C2C4C9" stroke-width="2.1"/></svg></div>
<div style="position:absolute;left:152px;top:1632px;width:28px;height:24px"><svg width="34" height="30" viewBox="0 0 34 30" style="position:absolute;left:-1px;top:-1px"><path d="M2.15 5.2 Q2.15 2.15 5.2 2.15 L11.6 2.15 L15.3 6.1 L24.8 6.1 Q27.85 6.1 27.85 9.1 L27.85 20.8 Q27.85 23.85 24.8 23.85 L5.2 23.85 Q2.15 23.85 2.15 20.8 Z" fill="#44464B" stroke="#DFE1E5" stroke-width="2.3" stroke-linejoin="round"/><rect x="15.2" y="13.2" width="17.6" height="17.6" rx="5" fill="#2B2D30"/><rect x="18.1" y="16.1" width="11.8" height="11.8" rx="3.2" fill="#25324D" stroke="#6B9BFA" stroke-width="2.3"/></svg></div>
<div class="tt tb" style="left:189px;top:1622px">blade<span class="dash"></span>tsdb<span class="dash"></span>tdengine</div>
<div style="position:absolute;left:152px;top:1674px;width:28px;height:24px"><svg width="32" height="30" viewBox="0 0 32 30" style="position:absolute;left:-2px;top:-1px"><path d="M8.5 9 L2.5 15 L8.5 21 M23.5 9 L29.5 15 L23.5 21 M18.5 5.5 L13.5 24.5" fill="none" stroke="#D39B69" stroke-width="2.4" stroke-linecap="round" stroke-linejoin="round"/></svg></div>
<div class="tt to" style="left:189px;top:1666px">.flattened<span class="dash"></span>pom.xml</div>
<div style="position:absolute;left:152px;top:1718px;width:28px;height:24px"><svg width="32" height="30" viewBox="0 0 32 30" style="position:absolute;left:-1px;top:-1px"><path d="M2.2 24 L6 6.5 M4.9 11.5 Q7.6 6 11.6 6 Q16.6 6 15.7 11 L13.1 24 M15.7 11 Q18.1 6 22.6 6 Q28.6 6 27.7 11 L25.1 24" fill="none" stroke="#6896F5" stroke-width="2.8" stroke-linecap="round" stroke-linejoin="round"/></svg></div>
<div class="tt tn" style="left:189px;top:1710px">pom.xml</div>
<div style="position:absolute;left:79px;top:1766px;width:14px;height:20px;z-index:2"><svg width="14" height="20" viewBox="0 0 14 20" style="position:absolute;left:0;top:0"><path d="M2 2 L10 10 L2 18" fill="none" stroke="#C2C4C9" stroke-width="2.1"/></svg></div>
<div style="position:absolute;left:114px;top:1764px;width:28px;height:24px"><svg width="34" height="30" viewBox="0 0 34 30" style="position:absolute;left:-1px;top:-1px"><path d="M2.15 5.2 Q2.15 2.15 5.2 2.15 L11.6 2.15 L15.3 6.1 L24.8 6.1 Q27.85 6.1 27.85 9.1 L27.85 20.8 Q27.85 23.85 24.8 23.85 L5.2 23.85 Q2.15 23.85 2.15 20.8 Z" fill="#44464B" stroke="#DFE1E5" stroke-width="2.3" stroke-linejoin="round"/><rect x="15.2" y="13.2" width="17.6" height="17.6" rx="5" fill="#2B2D30"/><rect x="18.1" y="16.1" width="11.8" height="11.8" rx="3.2" fill="#25324D" stroke="#6B9BFA" stroke-width="2.3"/></svg></div>
<div class="tt tb" style="left:151px;top:1754px">blade<span class="dash"></span>demo</div>
<div style="position:absolute;left:79px;top:1810px;width:14px;height:20px;z-index:2"><svg width="14" height="20" viewBox="0 0 14 20" style="position:absolute;left:0;top:0"><path d="M2 2 L10 10 L2 18" fill="none" stroke="#C2C4C9" stroke-width="2.1"/></svg></div>
<div style="position:absolute;left:114px;top:1808px;width:28px;height:24px"><svg width="34" height="30" viewBox="0 0 34 30" style="position:absolute;left:-1px;top:-1px"><path d="M2.15 5.2 Q2.15 2.15 5.2 2.15 L11.6 2.15 L15.3 6.1 L24.8 6.1 Q27.85 6.1 27.85 9.1 L27.85 20.8 Q27.85 23.85 24.8 23.85 L5.2 23.85 Q2.15 23.85 2.15 20.8 Z" fill="#44464B" stroke="#DFE1E5" stroke-width="2.3" stroke-linejoin="round"/><rect x="15.2" y="13.2" width="17.6" height="17.6" rx="5" fill="#2B2D30"/><rect x="18.1" y="16.1" width="11.8" height="11.8" rx="3.2" fill="#25324D" stroke="#6B9BFA" stroke-width="2.3"/></svg></div>
<div class="tt tb" style="left:151px;top:1798px">blade<span class="dash"></span>service</div>
<div style="position:absolute;left:79px;top:1854px;width:14px;height:20px;z-index:2"><svg width="14" height="20" viewBox="0 0 14 20" style="position:absolute;left:0;top:0"><path d="M2 2 L10 10 L2 18" fill="none" stroke="#C2C4C9" stroke-width="2.1"/></svg></div>
<div style="position:absolute;left:114px;top:1852px;width:28px;height:24px"><svg width="34" height="30" viewBox="0 0 34 30" style="position:absolute;left:-1px;top:-1px"><path d="M2.15 5.2 Q2.15 2.15 5.2 2.15 L11.6 2.15 L15.3 6.1 L24.8 6.1 Q27.85 6.1 27.85 9.1 L27.85 20.8 Q27.85 23.85 24.8 23.85 L5.2 23.85 Q2.15 23.85 2.15 20.8 Z" fill="#44464B" stroke="#DFE1E5" stroke-width="2.3" stroke-linejoin="round"/><rect x="15.2" y="13.2" width="17.6" height="17.6" rx="5" fill="#2B2D30"/><rect x="18.1" y="16.1" width="11.8" height="11.8" rx="3.2" fill="#25324D" stroke="#6B9BFA" stroke-width="2.3"/></svg></div>
</div></div>
<div style="position:absolute;left:674px;top:12px;width:1630px;height:1842px;background:#1E1F22"></div>
<div style="position:absolute;left:0;top:74px;width:2304px;height:1780px;overflow:hidden">
<div style="position:absolute;left:0;top:-74px;width:2304px;height:1854px">
<div style="position:absolute;left:676px;top:284px;width:1628px;height:48px;background:#26282E"></div>
<div style="position:absolute;left:1055.9px;top:284px;width:420.0px;height:48px;background:#3A3D3A"></div>
<div style="position:absolute;left:832px;top:74px;width:2px;height:1780px;background:#303236"></div>
<div style="position:absolute;left:901.0px;top:620px;width:2px;height:384px;background:#393B40"></div>
<div style="position:absolute;left:968.2px;top:812px;width:2px;height:48px;background:#393B40"></div>
<div style="position:absolute;left:901.0px;top:1196px;width:2px;height:576px;background:#393B40"></div>
<div style="position:absolute;left:968.2px;top:1388px;width:2px;height:336px;background:#393B40"></div>
<div style="position:absolute;left:1035.4px;top:1532px;width:2px;height:48px;background:#393B40"></div>
<div class="ln" style="top:44px">45</div>
<div class="cl" style="top:44px"><span class="ws"> </span><span class="dc">*</span><span class="ws"> </span><span class="dt">@author</span><span class="ws"> </span><span class="dc" style="font-style:italic">Chill</span></div>
<div class="ln" style="top:92px">46</div>
<div class="cl" style="top:92px"><span class="ws"> </span><span class="dc">*/</span></div>
<div class="ln" style="top:140px">47</div>
<div class="cl" style="top:140px"><span class="an">@Slf4j</span></div>
<div class="ln" style="top:188px">48</div>
<div class="cl" style="top:188px"><span class="an">@RequiredArgsConstructor</span></div>
<div class="ln" style="top:236px">49</div>
<div class="cl" style="top:236px"><span class="an">@Configuration</span>(proxyBeanMethods<span class="ws"> </span>=<span class="ws"> </span><span class="kw">false</span>)</div>
<div class="ln cur" style="top:284px">50</div>
<div class="cl" style="top:284px"><span class="kw">public</span><span class="ws"> </span><span class="kw">class</span><span class="ws"> </span><span class="bl caret">MqttConnectStatusListener</span><span class="ws"> </span><span class="kw">implements</span><span class="ws"> </span>IMqttConnectStatusListener<span class="ws"> </span>{</div>
<div class="ln" style="top:332px">51</div>
<div class="ln" style="top:380px">52</div>
<div class="cl" style="top:380px"><span class="tab"></span><span class="kw">private</span><span class="ws"> </span><span class="kw">final</span><span class="ws"> </span><span class="bl">DeviceStatusBatchTask</span><span class="ws"> </span><span class="fd">statusBatchTask</span>;</div>
<div class="ln" style="top:428px">53</div>
<div class="cl" style="top:428px"><span class="tab"></span><span class="kw">private</span><span class="ws"> </span><span class="kw">final</span><span class="ws"> </span>ISceneLinkService<span class="ws"> </span><span class="fd">sceneLinkService</span>;</div>
<div class="ln" style="top:476px">54</div>
<div class="ln" style="top:524px">55</div>
<div class="cl" style="top:524px"><span class="tab"></span><span class="an">@Override</span></div>
<div class="ln" style="top:572px">56</div>
<div class="cl" style="top:572px"><span class="tab"></span><span class="kw">public</span><span class="ws"> </span><span class="kw">void</span><span class="ws"> </span><span class="md">online</span>(<span class="bl">ChannelContext</span><span class="ws"> </span>context,<span class="ws"> </span><span class="bl">String</span><span class="ws"> </span>clientId,<span class="ws"> </span><span class="bl">String</span><span class="ws"> </span>username)<span class="ws"> </span>{</div>
<div class="ln" style="top:620px">57</div>
<div class="cl" style="top:620px"><span class="tab"></span><span class="tab"></span><span class="sf">log</span>.info(<span class="st">&quot;Mqtt<span class="ws"> </span>clientId:<span class="sb">{}</span><span class="ws"> </span>username:<span class="sb">{}</span><span class="ws"> </span>online.&quot;</span>,<span class="ws"> </span>clientId,<span class="ws"> </span>username);</div>
<div class="ln" style="top:668px">58</div>
<div class="cl" style="top:668px"><span class="tab"></span><span class="tab"></span><span class="cm">//<span class="ws"> </span><span class="cjk">触</span><span class="cjk">发</span><span class="cjk">设</span><span class="cjk">备</span><span class="cjk">上</span><span class="cjk">线</span><span class="cjk">场</span><span class="cjk">景</span><span class="cjk">联</span><span class="cjk">动</span></span></div>
<div class="ln" style="top:716px">59</div>
<div class="cl" style="top:716px"><span class="tab"></span><span class="tab"></span>IDevice<span class="ws"> </span>deviceInfo<span class="ws"> </span>=<span class="ws"> </span><span class="bl">ClientUtil</span>.<span class="sc">getDeviceInfo</span>(username);</div>
<div class="ln" style="top:764px">60</div>
<div class="cl" style="top:764px"><span class="tab"></span><span class="tab"></span><span class="kw">if</span><span class="ws"> </span>(deviceInfo<span class="ws"> </span>!=<span class="ws"> </span><span class="kw">null</span>)<span class="ws"> </span>{</div>
<div class="ln" style="top:812px">61</div>
<div class="cl" style="top:812px"><span class="tab"></span><span class="tab"></span><span class="tab"></span><span class="fd">sceneLinkService</span>.deviceOnline(deviceInfo);</div>
<div class="ln" style="top:860px">62</div>
<div class="cl" style="top:860px"><span class="tab"></span><span class="tab"></span>}</div>
<div class="ln" style="top:908px">63</div>
<div class="cl" style="top:908px"><span class="tab"></span><span class="tab"></span><span class="cm">//<span class="ws"> </span><span class="cjk">更</span><span class="cjk">新</span><span class="cjk">设</span><span class="cjk">备</span><span class="cjk">状</span><span class="cjk">态</span></span></div>
<div class="ln" style="top:956px">64</div>
<div class="cl" style="top:956px"><span class="tab"></span><span class="tab"></span><span class="fd">statusBatchTask</span>.add(username,<span class="ws"> </span><span class="bl">DeviceStatus</span>.<span class="sf">ONLINE</span>);</div>
<div class="ln" style="top:1004px">65</div>
<div class="cl" style="top:1004px"><span class="tab"></span>}</div>
<div class="ln" style="top:1052px">66</div>
<div class="ln" style="top:1100px">67</div>
<div class="cl" style="top:1100px"><span class="tab"></span><span class="an">@Override</span></div>
<div class="ln" style="top:1148px">68</div>
<div class="cl" style="top:1148px"><span class="tab"></span><span class="kw">public</span><span class="ws"> </span><span class="kw">void</span><span class="ws"> </span><span class="md">offline</span>(<span class="bl">ChannelContext</span><span class="ws"> </span>context,<span class="ws"> </span><span class="bl">String</span><span class="ws"> </span>clientId,<span class="ws"> </span><span class="bl">String</span><span class="ws"> </span>username,<span class="ws"> </span><span class="bl">String</span><span class="ws"> </span>reason)<span class="ws"> </span>{</div>
<div class="ln" style="top:1196px">69</div>
<div class="cl" style="top:1196px"><span class="tab"></span><span class="tab"></span><span class="sf">log</span>.info(<span class="st">&quot;Mqtt<span class="ws"> </span>clientId:<span class="sb">{}</span><span class="ws"> </span>username:<span class="sb">{}</span><span class="ws"> </span>offline<span class="ws"> </span>reason:<span class="sb">{}</span>.&quot;</span>,<span class="ws"> </span>clientId,<span class="ws"> </span>username,<span class="ws"> </span>reason);</div>
<div class="ln" style="top:1244px">70</div>
<div class="cl" style="top:1244px"><span class="tab"></span><span class="tab"></span>Set&lt;<span class="bl">ChannelContext</span>&gt;<span class="ws"> </span>contextSet<span class="ws"> </span>=<span class="ws"> </span><span class="bl">Tio</span>.<span class="sc">getByUserid</span>(context.<span class="fd">tioConfig</span>,<span class="ws"> </span>username);</div>
<div class="ln" style="top:1292px">71</div>
<div class="cl" style="top:1292px"><span class="tab"></span><span class="tab"></span><span class="cm">//<span class="ws"> </span><span class="cjk">只</span><span class="cjk">有</span><span class="cjk">一</span><span class="cjk">个</span><span class="cjk">连</span><span class="cjk">接</span><span class="cjk">的</span><span class="cjk">时</span><span class="cjk">候</span><span class="cjk">，</span><span class="cjk">更</span><span class="cjk">新</span><span class="cjk">状</span><span class="cjk">态</span></span></div>
<div class="ln" style="top:1340px">72</div>
<div class="cl" style="top:1340px"><span class="tab"></span><span class="tab"></span><span class="kw">if</span><span class="ws"> </span>(contextSet.contains(context)<span class="ws"> </span>&amp;&amp;<span class="ws"> </span>contextSet.size()<span class="ws"> </span>==<span class="ws"> </span><span class="nm">1</span>)<span class="ws"> </span>{</div>
<div class="ln" style="top:1388px">73</div>
<div class="cl" style="top:1388px"><span class="tab"></span><span class="tab"></span><span class="tab"></span><span class="cm">//<span class="ws"> </span><span class="cjk">触</span><span class="cjk">发</span><span class="cjk">设</span><span class="cjk">备</span><span class="cjk">下</span><span class="cjk">线</span><span class="cjk">场</span><span class="cjk">景</span><span class="cjk">联</span><span class="cjk">动</span></span></div>
<div class="ln" style="top:1436px">74</div>
<div class="cl" style="top:1436px"><span class="tab"></span><span class="tab"></span><span class="tab"></span>IDevice<span class="ws"> </span>deviceInfo<span class="ws"> </span>=<span class="ws"> </span><span class="bl">ClientUtil</span>.<span class="sc">getDeviceInfo</span>(username);</div>
<div class="ln" style="top:1484px">75</div>
<div class="cl" style="top:1484px"><span class="tab"></span><span class="tab"></span><span class="tab"></span><span class="kw">if</span><span class="ws"> </span>(deviceInfo<span class="ws"> </span>!=<span class="ws"> </span><span class="kw">null</span>)<span class="ws"> </span>{</div>
<div class="ln" style="top:1532px">76</div>
<div class="cl" style="top:1532px"><span class="tab"></span><span class="tab"></span><span class="tab"></span><span class="tab"></span><span class="fd">sceneLinkService</span>.deviceOffline(deviceInfo);</div>
<div class="ln" style="top:1580px">77</div>
<div class="cl" style="top:1580px"><span class="tab"></span><span class="tab"></span><span class="tab"></span>}</div>
<div class="ln" style="top:1628px">78</div>
<div class="cl" style="top:1628px"><span class="tab"></span><span class="tab"></span><span class="tab"></span><span class="cm">//<span class="ws"> </span><span class="cjk">更</span><span class="cjk">新</span><span class="cjk">设</span><span class="cjk">备</span><span class="cjk">状</span><span class="cjk">态</span></span></div>
<div class="ln" style="top:1676px">79</div>
<div class="cl" style="top:1676px"><span class="tab"></span><span class="tab"></span><span class="tab"></span><span class="fd">statusBatchTask</span>.add(username,<span class="ws"> </span><span class="bl">DeviceStatus</span>.<span class="sf">OFFLINE</span>);</div>
<div class="ln" style="top:1724px">80</div>
<div class="cl" style="top:1724px"><span class="tab"></span><span class="tab"></span>}</div>
<div class="ln" style="top:1772px">81</div>
<div class="cl" style="top:1772px"><span class="tab"></span>}</div>
<div class="ln" style="top:1820px">82</div>
<svg width="256" height="8" style="position:absolute;left:1508.5px;top:415px"><polyline points="0.0,1.0 4.1,5.2 8.2,1.0 12.3,5.2 16.4,1.0 20.5,5.2 24.6,1.0 28.7,5.2 32.8,1.0 36.9,5.2 41.0,1.0 45.1,5.2 49.2,1.0 53.3,5.2 57.4,1.0 61.5,5.2 65.6,1.0 69.7,5.2 73.8,1.0 77.9,5.2 82.0,1.0 86.1,5.2 90.2,1.0 94.3,5.2 98.4,1.0 102.5,5.2 106.6,1.0 110.7,5.2 114.8,1.0 118.9,5.2 123.0,1.0 127.1,5.2 131.2,1.0 135.3,5.2 139.4,1.0 143.5,5.2 147.6,1.0 151.7,5.2 155.8,1.0 159.9,5.2 164.0,1.0 168.1,5.2 172.2,1.0 176.3,5.2 180.4,1.0 184.5,5.2 188.6,1.0 192.7,5.2 196.8,1.0 200.9,5.2 205.0,1.0 209.1,5.2 213.2,1.0 217.3,5.2 221.4,1.0 225.5,5.2 229.6,1.0 233.7,5.2 237.8,1.0 241.9,5.2 246.0,1.0 250.1,5.2" fill="none" stroke="#D95E5E" stroke-width="1.4"/></svg>
<svg width="273" height="8" style="position:absolute;left:1441.3px;top:463px"><polyline points="0.0,1.0 4.1,5.2 8.2,1.0 12.3,5.2 16.4,1.0 20.5,5.2 24.6,1.0 28.7,5.2 32.8,1.0 36.9,5.2 41.0,1.0 45.1,5.2 49.2,1.0 53.3,5.2 57.4,1.0 61.5,5.2 65.6,1.0 69.7,5.2 73.8,1.0 77.9,5.2 82.0,1.0 86.1,5.2 90.2,1.0 94.3,5.2 98.4,1.0 102.5,5.2 106.6,1.0 110.7,5.2 114.8,1.0 118.9,5.2 123.0,1.0 127.1,5.2 131.2,1.0 135.3,5.2 139.4,1.0 143.5,5.2 147.6,1.0 151.7,5.2 155.8,1.0 159.9,5.2 164.0,1.0 168.1,5.2 172.2,1.0 176.3,5.2 180.4,1.0 184.5,5.2 188.6,1.0 192.7,5.2 196.8,1.0 200.9,5.2 205.0,1.0 209.1,5.2 213.2,1.0 217.3,5.2 221.4,1.0 225.5,5.2 229.6,1.0 233.7,5.2 237.8,1.0 241.9,5.2 246.0,1.0 250.1,5.2 254.2,1.0 258.3,5.2 262.4,1.0 266.5,5.2 270.6,1.0" fill="none" stroke="#D95E5E" stroke-width="1.4"/></svg>
<div class="inl" style="left:966.3px;top:140px"><svg width="22" height="22" viewBox="0 0 22 22" style="position:absolute;left:0;top:12px"><circle cx="11" cy="6.5" r="4.3" fill="none" stroke="#9A9DA3" stroke-width="2"/><path d="M2.5 20.5 Q2.5 13 11 13 Q19.5 13 19.5 20.5 Z" fill="none" stroke="#9A9DA3" stroke-width="2" stroke-linejoin="round"/></svg><span style="position:absolute;left:29px;top:0">smallchill +1</span></div>
<div class="inl" style="left:1083.9px;top:524px"><svg width="22" height="22" viewBox="0 0 22 22" style="position:absolute;left:0;top:12px"><circle cx="11" cy="6.5" r="4.3" fill="none" stroke="#9A9DA3" stroke-width="2"/><path d="M2.5 20.5 Q2.5 13 11 13 Q19.5 13 19.5 20.5 Z" fill="none" stroke="#9A9DA3" stroke-width="2" stroke-linejoin="round"/></svg><span style="position:absolute;left:29px;top:0">smallchill +1</span></div>
<div class="inl" style="left:1083.9px;top:1100px"><svg width="22" height="22" viewBox="0 0 22 22" style="position:absolute;left:0;top:12px"><circle cx="11" cy="6.5" r="4.3" fill="none" stroke="#9A9DA3" stroke-width="2"/><path d="M2.5 20.5 Q2.5 13 11 13 Q19.5 13 19.5 20.5 Z" fill="none" stroke="#9A9DA3" stroke-width="2" stroke-linejoin="round"/></svg><span style="position:absolute;left:29px;top:0">smallchill +1</span></div>
<div style="position:absolute;left:719px;top:289px;width:36px;height:36px"><svg width="36" height="36" viewBox="0 0 36 36" style="position:absolute;left:0;top:0"><ellipse cx="16.3" cy="16.3" rx="15.6" ry="13.4" transform="rotate(45 16.3 16.3)" fill="#243325" stroke="#5FA266" stroke-width="2.4"/><path d="M5.5 5.5 L27 27" stroke="#5FA266" stroke-width="2.4"/><path d="M34 26 L34 34 L26 34 Z" fill="#DFE1E5"/></svg></div>
<div style="position:absolute;left:719px;top:385px;width:36px;height:36px"><svg width="36" height="36" viewBox="0 0 36 36" style="position:absolute;left:0;top:0"><ellipse cx="16.3" cy="16.3" rx="15.6" ry="13.4" transform="rotate(45 16.3 16.3)" fill="#243325" stroke="#5FA266" stroke-width="2.4"/><path d="M5.5 5.5 L27 27" stroke="#5FA266" stroke-width="2.4"/><path d="M15 26 H31.5 M25.8 20 L31.8 26 L25.8 32" fill="none" stroke="#DFE1E5" stroke-width="2.4" stroke-linecap="round" stroke-linejoin="round"/><path d="M12 23.5 H31" stroke="#1E1F22" stroke-width="0"/></svg></div>
<div style="position:absolute;left:719px;top:433px;width:36px;height:36px"><svg width="36" height="36" viewBox="0 0 36 36" style="position:absolute;left:0;top:0"><ellipse cx="16.3" cy="16.3" rx="15.6" ry="13.4" transform="rotate(45 16.3 16.3)" fill="#243325" stroke="#5FA266" stroke-width="2.4"/><path d="M5.5 5.5 L27 27" stroke="#5FA266" stroke-width="2.4"/><path d="M15 26 H31.5 M25.8 20 L31.8 26 L25.8 32" fill="none" stroke="#DFE1E5" stroke-width="2.4" stroke-linecap="round" stroke-linejoin="round"/><path d="M12 23.5 H31" stroke="#1E1F22" stroke-width="0"/></svg></div>
<div style="position:absolute;left:720px;top:576px;width:40px;height:34px"><svg width="40" height="34" viewBox="0 0 40 34" style="position:absolute;left:0;top:0"><circle cx="13" cy="19" r="11" fill="#243325" stroke="#5FA266" stroke-width="2.3"/><path d="M9.5 13.5 H16.5 M13 13.5 V24.5 M9.5 24.5 H16.5" fill="none" stroke="#5FA266" stroke-width="1.9"/><path d="M26 6 V20.5 M20.7 11 L26 5.7 L31.3 11" fill="none" stroke="#1E1F22" stroke-width="6" stroke-linecap="round" stroke-linejoin="round"/><path d="M26 6 V20.5 M20.7 11 L26 5.7 L31.3 11" fill="none" stroke="#E06C6C" stroke-width="2.4" stroke-linecap="round" stroke-linejoin="round"/></svg></div>
<div style="position:absolute;left:720px;top:1152px;width:40px;height:34px"><svg width="40" height="34" viewBox="0 0 40 34" style="position:absolute;left:0;top:0"><circle cx="13" cy="19" r="11" fill="#243325" stroke="#5FA266" stroke-width="2.3"/><path d="M9.5 13.5 H16.5 M13 13.5 V24.5 M9.5 24.5 H16.5" fill="none" stroke="#5FA266" stroke-width="1.9"/><path d="M26 6 V20.5 M20.7 11 L26 5.7 L31.3 11" fill="none" stroke="#1E1F22" stroke-width="6" stroke-linecap="round" stroke-linejoin="round"/><path d="M26 6 V20.5 M20.7 11 L26 5.7 L31.3 11" fill="none" stroke="#E06C6C" stroke-width="2.4" stroke-linecap="round" stroke-linejoin="round"/></svg></div>
<div style="position:absolute;left:755px;top:1153px;width:34px;height:34px;transform:scale(1.14);transform-origin:0 0"><svg width="34" height="34" viewBox="0 0 34 34" style="position:absolute;left:0;top:0"><path d="M24 26.5 Q20.5 28.5 16 28.5 Q3.5 28.5 3.5 16 Q3.5 3.5 16 3.5 Q28.5 3.5 28.5 15.5 Q28.5 21 25 21 Q22 21 22 17.5 L22 10 M22 15.5 Q22 21 16.5 21 Q11 21 11 15.5 Q11 10 16.5 10 Q22 10 22 15.5" fill="none" stroke="#DFE1E5" stroke-width="1.9" stroke-linecap="round"/></svg></div>
</div></div>
<div style="position:absolute;left:674px;top:72px;width:1630px;height:2px;background:#393B40"></div>
<div style="position:absolute;left:676px;top:68px;width:490px;height:6px;background:#4779E6;border-radius:3px"></div>
<svg width="32" height="32" viewBox="0 0 32 32" style="position:absolute;left:684px;top:26.5px"><circle cx="16" cy="16" r="13" fill="#25324D" stroke="#548AF7" stroke-width="2.6"/><path d="M20.8 12 Q19.3 9.2 16.2 9.2 Q11.2 9.2 11.2 16 Q11.2 22.8 16.2 22.8 Q19.3 22.8 20.8 20" fill="none" stroke="#548AF7" stroke-width="2.2" stroke-linecap="round"/></svg>
<div style="position:absolute;left:727px;top:19px;height:44px;line-height:44px;font-size:27.5px;color:#DFE1E5;letter-spacing:0.25px;white-space:nowrap;padding-top:2px;-webkit-text-stroke:0.3px #DFE1E5">MqttConnectStatusListener.java</div>
<svg width="18" height="18" viewBox="0 0 18 18" style="position:absolute;left:1133px;top:33px"><path d="M2 2 L16 16 M16 2 L2 16" stroke="#8C8F94" stroke-width="2"/></svg>
<div style="position:absolute;left:2288px;top:88px;width:24px;height:24px;border-radius:12px;background:#D65C5C"></div>
<div style="position:absolute;left:2298px;top:92px;width:4px;height:10px;background:#1E1F22;border-radius:2px"></div>
<div style="position:absolute;left:2298px;top:104px;width:4px;height:4px;background:#1E1F22;border-radius:2px"></div>
<svg width="2304" height="1854" style="position:absolute;left:0;top:0;pointer-events:none"><path d="M574.6 915.1 L604.1 951.4 L592.3 953.8 L666.6 1281 Q664 1287.5 660.2 1282 L576.6 957.2 L564.2 959.9 Z" fill="#E5484D" stroke="#E5484D" stroke-width="1" stroke-linejoin="round"/></svg>
<div style="position:absolute;left:1921px;top:1732px;width:17px;height:16px;border-left:4.5px solid #5CBD73;border-top:4.5px solid #5CBD73"></div>
<div style="position:absolute;left:2199px;top:1777px;width:17px;height:16px;border-right:4.5px solid #5CBD73;border-bottom:4.5px solid #5CBD73"></div>
<div id="wm" style="position:absolute;left:1935px;top:1737px;height:44px;line-height:44px;white-space:nowrap;color:#5CBD73;font-weight:bold;transform:skewX(-13deg) scaleY(0.84);transform-origin:left bottom"><span style="font-size:33px;letter-spacing:4.6px;-webkit-text-stroke:1.6px #5CBD73">Blade</span><span style="font-size:35px;letter-spacing:0.6px;-webkit-text-stroke:1.4px #5CBD73">技术社区</span></div>
</div></body></html>
